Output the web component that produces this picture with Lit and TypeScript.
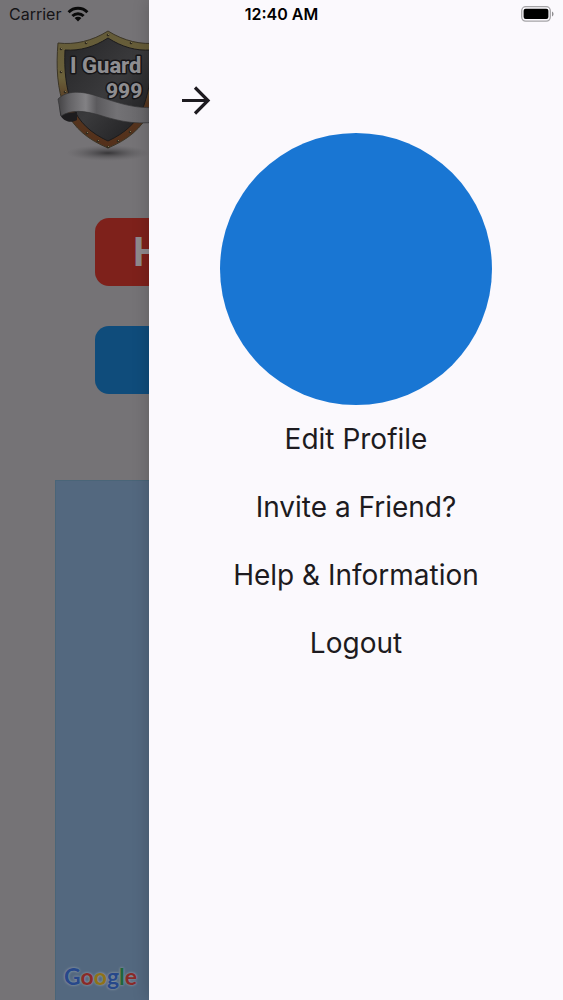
import { LitElement, html, css, svg } from "lit";
import { customElement } from "lit/decorators.js";

@customElement("status-bar")
class StatusBar extends LitElement {
  static styles = css`
    :host {
      display: grid;
      grid-template-columns: 1fr auto 1fr;
      align-items: center;
      height: 28px;
      padding: 0 9px;
      color: #000;
      font: 400 16px/20px Inter, sans-serif;
    }
    .carrier {
      display: flex;
      align-items: center;
      gap: 6px;
      color: #151416;
    }
    .time {
      font-weight: 600;
    }
    .battery {
      justify-self: end;
    }
    svg {
      display: block;
    }
  `;

  render() {
    return html`
      <div class="carrier">
        <span>Carrier</span>
        <svg width="22" height="16" viewBox="0 0 22 16" aria-hidden="true">
          <g fill="none" stroke="#0a0a0a" stroke-width="3">
            <path d="M1.6 6.2a13.4 13.4 0 0 1 18.8 0" />
            <path d="M5.4 10a8 8 0 0 1 11.2 0" />
          </g>
          <path d="M11 15.4 7.6 12a4.9 4.9 0 0 1 6.8 0z" fill="#0a0a0a" />
        </svg>
      </div>
      <div class="time">12:40 AM</div>
      <svg class="battery" width="33" height="16" viewBox="0 0 33 16" aria-hidden="true">
        <rect x=".7" y=".7" width="28.6" height="14.4" rx="4" fill="none" stroke="#a5a4a7" stroke-width="1.3" />
        <rect x="2.6" y="2.8" width="24.8" height="10.2" rx="2" fill="#000" />
        <path d="M31 5.4c2 .8 2 4.2 0 5z" fill="#8f8e91" />
      </svg>
    `;
  }
}

@customElement("shield-logo")
class ShieldLogo extends LitElement {
  static styles = css`
    :host,
    svg {
      display: block;
    }
    .name {
      font: 800 22px Roboto, "Liberation Sans", sans-serif;
      fill: #8f8e91;
      stroke: #161517;
      stroke-width: 3px;
      paint-order: stroke;
      stroke-linejoin: round;
    }
    .code {
      font-size: 21px;
    }
  `;

  render() {
    const rivets = [
      [58, 5], [36, 13], [81, 13], [11, 19], [11, 42], [15, 62],
      [104, 19], [37, 103], [48, 111], [58, 117], [68, 111], [80, 102],
    ];
    return html`
      <svg width="116" height="132" viewBox="0 0 116 132" role="img" aria-label="I Guard 999">
        <defs>
          <linearGradient id="frame" x1="0" y1="0" x2="0" y2="1">
            <stop offset="0" stop-color="#645b38" />
            <stop offset=".4" stop-color="#6b613b" />
            <stop offset=".62" stop-color="#553620" />
            <stop offset="1" stop-color="#54301a" />
          </linearGradient>
          <linearGradient id="plate" x1="0" y1="0" x2="1" y2="1">
            <stop offset="0" stop-color="#252527" />
            <stop offset=".5" stop-color="#3a3a3c" />
            <stop offset="1" stop-color="#1a1a1c" />
          </linearGradient>
          <linearGradient id="ribbon" x1="0" x2="1">
            <stop offset="0" stop-color="#444345" />
            <stop offset=".1" stop-color="#626164" />
            <stop offset=".26" stop-color="#828184" />
            <stop offset=".36" stop-color="#5b5a5d" />
            <stop offset=".55" stop-color="#737275" />
            <stop offset=".8" stop-color="#68676a" />
            <stop offset="1" stop-color="#4c4b4e" />
          </linearGradient>
          <radialGradient id="shade">
            <stop offset="0" stop-color="#2c2b2d" stop-opacity=".85" />
            <stop offset="1" stop-color="#5c5b5e" stop-opacity="0" />
          </radialGradient>
        </defs>
        <ellipse cx="58" cy="123" rx="42" ry="8" fill="url(#shade)" />
        <path d="M58 1C42 11 25 15 8 13c-2 23-1 46 7 66 9 20 24 31 43 39 19-8 34-19 43-39 8-20 9-43 7-66C91 15 74 11 58 1z" fill="url(#frame)" stroke="#3b3526" />
        <path d="M58 8C44 17 30 21 15 20c-1 20 1 38 7 55 7 18 19 28 36 36 17-8 29-18 36-36 6-17 8-35 7-55C86 21 72 17 58 8z" fill="url(#plate)" stroke="#1c1b1c" />
        ${rivets.map(([x, y]) => svg`<circle cx=${x} cy=${y} r="1.3" fill="#2f2a1e" /><circle cx=${x + 0.5} cy=${y - 0.5} r=".6" fill="#928560" />`)}
        <path d="M9 69c3 5 2 9 8 14l10-1v8c-6 4-15 1-17-6z" fill="#1d1c1e" />
        <path d="M8 69c9-9 24-8 39-3 22 7 42 15 68 10v14c-24 6-44 2-66-5-14-4-27-6-38 1z" fill="url(#ribbon)" stroke="#343335" stroke-width=".7" />
        <text class="name" x="20" y="43">I Guard</text>
        <text class="name code" x="56" y="68">999</text>
      </svg>
    `;
  }
}

@customElement("home-page")
class HomePage extends LitElement {
  static styles = css`
    :host {
      display: flex;
      flex-direction: column;
      background: #757376;
    }
    .logo {
      padding: 30px 0 56px 50px;
    }
    .actions {
      display: flex;
      flex-direction: column;
      gap: 40px;
      padding: 0 95px;
    }
    .action {
      height: 68px;
      border: 0;
      border-radius: 14px;
      padding: 0 38px;
      text-align: left;
      font: 700 40px/48px Inter, sans-serif;
      color: #8f8b8e;
      background: #7e211b;
    }
    .track {
      background: #0f4c7b;
    }
    .map {
      flex: 1;
      display: flex;
      align-items: flex-end;
      margin: 86px 55px 0;
      padding: 0 8px 8px;
      background: #53687f;
      border: 1px solid #4a6578;
      border-bottom: 0;
    }
    .google {
      font: 700 23px/32px Lato, sans-serif;
      text-shadow: 0 0 3px #8793a0, 0 0 2px #8793a0;
    }
    .b {
      color: #27488a;
    }
    .r {
      color: #8a2a28;
    }
    .y {
      color: #8f7218;
    }
    .g {
      color: #21653a;
    }
  `;

  render() {
    return html`
      <shield-logo class="logo"></shield-logo>
      <div class="actions">
        <button class="action">H</button>
        <button class="action track"></button>
      </div>
      <div class="map">
        <div class="google"><span class="b">G</span><span class="r">o</span><span class="y">o</span><span class="b">g</span><span class="g">l</span><span class="r">e</span></div>
      </div>
    `;
  }
}

@customElement("side-drawer")
class SideDrawer extends LitElement {
  static styles = css`
    :host {
      display: flex;
      flex-direction: column;
      box-sizing: border-box;
      padding: 82px 28px 0;
      background: #fbf9fd;
      box-shadow: 0 0 16px rgba(0, 0, 0, 0.2);
    }
    .close {
      align-self: flex-start;
      padding: 0;
      border: 0;
      background: none;
    }
    .close svg {
      display: block;
    }
    .avatar {
      align-self: center;
      width: 272px;
      aspect-ratio: 1;
      margin-top: 15px;
      border-radius: 50%;
      background: #1976d3;
    }
    .menu {
      display: flex;
      flex-direction: column;
      align-items: center;
    }
    .item {
      font: 400 28px/68px Inter, sans-serif;
      color: #1d1b20;
      text-decoration: none;
    }
  `;

  render() {
    const items = ["Edit Profile", "Invite a Friend?", "Help & Information", "Logout"];
    return html`
      <button class="close" aria-label="Close menu">
        <svg width="36" height="36" viewBox="0 0 36 36" fill="none" stroke="#1d1b20" stroke-width="3.2">
          <path d="M5 18.5h26M18 5.5l13 13-13 13" />
        </svg>
      </button>
      <div class="avatar"></div>
      <nav class="menu">
        ${items.map((label) => html`<a class="item" href="#">${label}</a>`)}
      </nav>
    `;
  }
}

@customElement("app-root")
class AppRoot extends LitElement {
  static styles = css`
    :host {
      display: grid;
      grid-template: minmax(100vh, auto) / minmax(0, 1fr);
      overflow: hidden;
    }
    .layer {
      grid-area: 1 / 1;
    }
    .drawer {
      justify-self: end;
      width: min(414px, 85%);
    }
    .status {
      align-self: start;
      z-index: 1;
    }
  `;

  render() {
    return html`
      <home-page class="layer"></home-page>
      <side-drawer class="layer drawer"></side-drawer>
      <status-bar class="layer status"></status-bar>
    `;
  }
}
